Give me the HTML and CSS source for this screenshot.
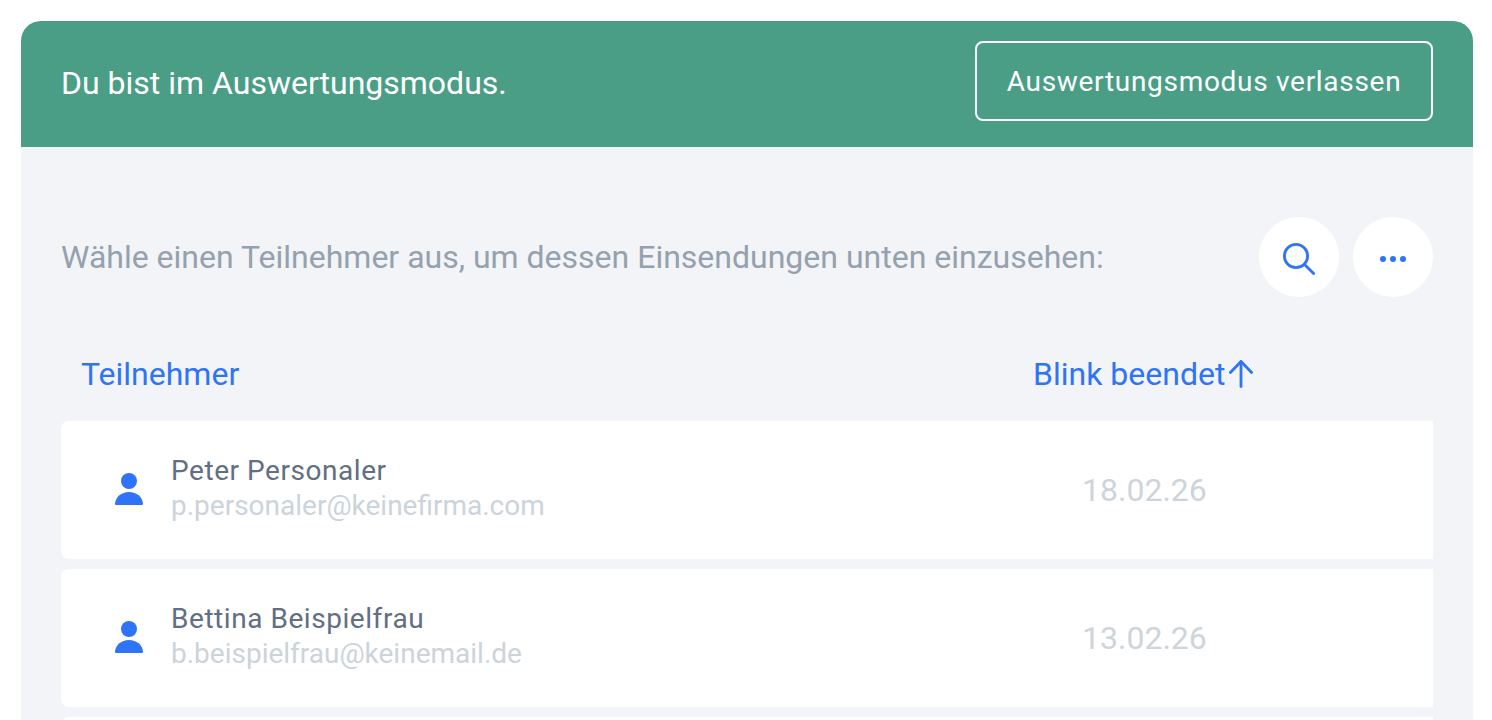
FILE: index.html
```html
<!DOCTYPE html>
<html lang="de">
<head>
    <meta charset="UTF-8">
    <meta name="viewport" content="width=device-width, initial-scale=1.0">
    <title>Auswertungsmodus</title>
    <link rel="stylesheet" href="styles.css">
</head>
<body>
    <div class="panel">
        <div class="mode-bar">
            <span class="mode-text">Du bist im Auswertungsmodus.</span>
            <button class="mode-exit">Auswertungsmodus verlassen</button>
        </div>

        <div class="content">
            <div class="intro">
                <p class="intro-text">Wähle einen Teilnehmer aus, um dessen Einsendungen unten einzusehen:</p>
                <div class="intro-actions">
                    <button class="round-btn" aria-label="Suchen">
                        <svg width="32" height="32" viewBox="0 0 32 32" fill="none" stroke="#2f74f6" stroke-width="2.8" stroke-linecap="round">
                            <circle cx="13" cy="13" r="11.6"/>
                            <path d="M21.5 21.5 L30.6 30.6"/>
                        </svg>
                    </button>
                    <button class="round-btn" aria-label="Mehr">
                        <svg width="26" height="6" viewBox="0 0 26 6" fill="#2f74f6">
                            <circle cx="3" cy="3" r="3"/>
                            <circle cx="13" cy="3" r="3"/>
                            <circle cx="23" cy="3" r="3"/>
                        </svg>
                    </button>
                </div>
            </div>

            <div class="list-head">
                <span class="col-name">Teilnehmer</span>
                <span class="col-date">Blink beendet<svg class="sort-arrow" width="24" height="28" viewBox="0 0 24 28" fill="none" stroke="#2f74f6" stroke-width="2.8" stroke-linecap="round" stroke-linejoin="round"><path d="M12 26.6 V1.6"/><path d="M1.4 12.4 L12 1.6 L22.6 12.4"/></svg></span>
            </div>

            <div class="row">
                <div class="row-user">
                    <svg class="user-icon" width="28" height="32" viewBox="0 0 28 32" fill="#2f74f6">
                        <circle cx="14" cy="8" r="8"/>
                        <path d="M1 32 C0 32 0 31 0 30.5 C0.5 24 6.5 19 14 19 C21.5 19 27.5 24 28 30.5 C28 31 28 32 27 32 Z"/>
                    </svg>
                    <div class="user-text">
                        <div class="user-name">Peter Personaler</div>
                        <div class="user-mail">p.personaler@keinefirma.com</div>
                    </div>
                </div>
                <div class="row-date">18.02.26</div>
            </div>

            <div class="row">
                <div class="row-user">
                    <svg class="user-icon" width="28" height="32" viewBox="0 0 28 32" fill="#2f74f6">
                        <circle cx="14" cy="8" r="8"/>
                        <path d="M1 32 C0 32 0 31 0 30.5 C0.5 24 6.5 19 14 19 C21.5 19 27.5 24 28 30.5 C28 31 28 32 27 32 Z"/>
                    </svg>
                    <div class="user-text">
                        <div class="user-name">Bettina Beispielfrau</div>
                        <div class="user-mail">b.beispielfrau@keinemail.de</div>
                    </div>
                </div>
                <div class="row-date">13.02.26</div>
            </div>

            <div class="row"></div>
        </div>
    </div>
</body>
</html>
```

FILE: styles.css
```css
html, body {
    height: 100%;
    overflow: hidden;
}
body {
    font-family: Roboto, "Liberation Sans", sans-serif;
    margin: 0;
    padding: 21px 19px 0 21px;
    box-sizing: border-box;
    background-color: #fff;
}
button {
    font-family: inherit;
    cursor: pointer;
}
.panel {
    height: 699px;
    background-color: #f2f4f8;
    border-radius: 20px 20px 0 0;
    overflow: hidden;
}
.mode-bar {
    background-color: #4a9e85;
    color: #fff;
    height: 126px;
    box-sizing: border-box;
    padding: 20px 40px 0;
    display: flex;
    justify-content: space-between;
    align-items: flex-start;
}
.mode-text {
    font-size: 32px;
    line-height: 44px;
    padding-top: 20px;
}
.mode-exit {
    width: 458px;
    height: 80px;
    padding: 0;
    background: none;
    border: 2px solid #fff;
    border-radius: 8px;
    color: #fff;
    font-size: 28px;
    letter-spacing: 0.7px;
}
.content {
    padding: 70px 40px 0;
}
.intro {
    display: flex;
    justify-content: space-between;
    align-items: center;
}
.intro-text {
    margin: 0;
    font-size: 32px;
    color: #95a1ac;
}
.intro-actions {
    display: flex;
    gap: 14px;
}
.round-btn {
    width: 80px;
    height: 80px;
    border: none;
    border-radius: 50%;
    background-color: #fff;
    padding: 4px 0 0;
    display: flex;
    justify-content: center;
    align-items: center;
}
.list-head {
    display: flex;
    align-items: center;
    height: 124px;
    padding-top: 30px;
    box-sizing: border-box;
    color: #2f74f6;
    font-size: 32px;
}
.col-name {
    padding-left: 20px;
    width: 952px;
}
.col-date {
    display: flex;
    align-items: center;
    gap: 4px;
}
.row {
    display: flex;
    align-items: center;
    height: 138px;
    margin-bottom: 10px;
    background-color: #fff;
    border-radius: 8px 0 0 8px;
}
.row-user {
    display: flex;
    align-items: center;
    width: 1021px;
    padding: 0 0 2px 54px;
    box-sizing: border-box;
}
.user-icon {
    margin-right: 28px;
}
.user-text {
    padding-bottom: 2px;
}
.user-name {
    font-size: 28px;
    line-height: 36px;
    color: #626e82;
    letter-spacing: 0.55px;
}
.user-mail {
    font-size: 28px;
    line-height: 34px;
    color: #cbd4da;
}
.row-date {
    font-size: 32px;
    color: #cdd5da;
}
```
